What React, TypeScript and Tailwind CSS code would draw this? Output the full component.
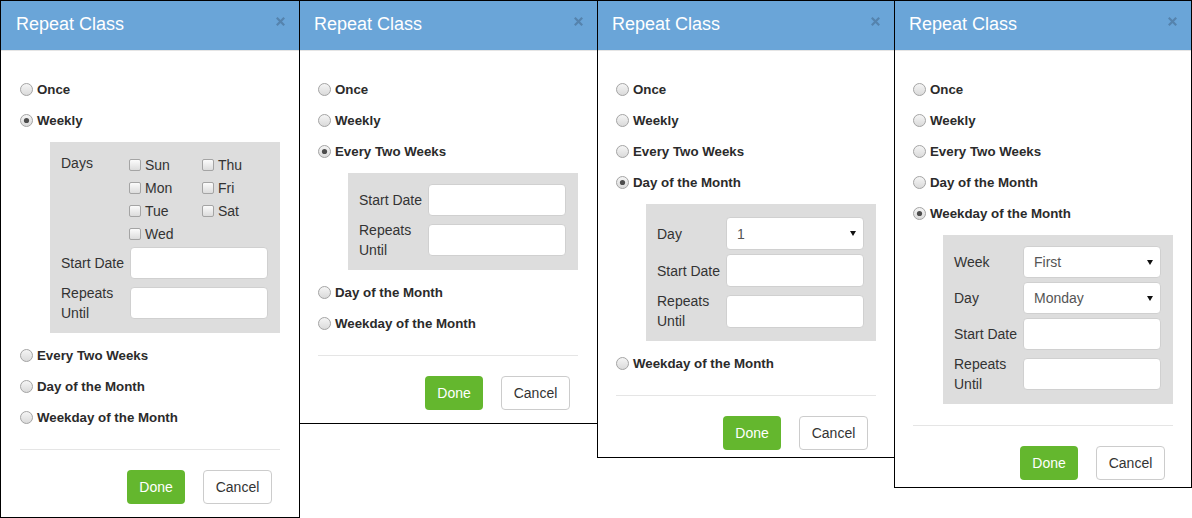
import React from "react";

const OPTIONS = ["Once", "Weekly", "Every Two Weeks", "Day of the Month", "Weekday of the Month"];

function Radio({ checked }: { checked: boolean }) {
  return (
    <svg width="13" height="13" viewBox="0 0 13 13" className="shrink-0 mb-[2px]">
      <defs>
        <linearGradient id="rgrad" x1="0" y1="0" x2="0" y2="1">
          <stop offset="0" stopColor="#f6f6f6" />
          <stop offset="1" stopColor="#d9d9d9" />
        </linearGradient>
      </defs>
      <circle cx="6.5" cy="6.5" r="6" fill="url(#rgrad)" stroke="#a4a4a4" strokeWidth="1" />
      {checked && <circle cx="6.5" cy="6.5" r="2.6" fill="#4d4d4d" />}
    </svg>
  );
}

function Check({ label }: { label: string }) {
  return (
    <div className="flex items-center h-[23px] gap-[4px]">
      <div className="w-[12px] h-[12px] rounded-[2px] border border-[#a4a4a4] bg-gradient-to-b from-[#fbfbfb] to-[#dcdcdc] shrink-0" />
      <span className="text-[14px] leading-[20px] text-[#333]">{label}</span>
    </div>
  );
}

function TextBox({ tall }: { tall: boolean }) {
  return (
    <input
      type="text"
      readOnly
      className={
        tall
          ? "w-[138px] h-[33px] bg-white rounded-[4px] border border-[#d0d0d0] outline-none"
          : "w-[138px] h-[32px] bg-white rounded-[4px] border border-[#d0d0d0] outline-none"
      }
    />
  );
}

function SelectBox({ value, tall }: { value: string; tall: boolean }) {
  return (
    <div
      className={
        tall
          ? "w-[138px] h-[33px] bg-white rounded-[4px] border border-[#d0d0d0] flex items-center justify-between pl-[10px] pr-[7px]"
          : "w-[138px] h-[32px] bg-white rounded-[4px] border border-[#d0d0d0] flex items-center justify-between pl-[10px] pr-[7px]"
      }
    >
      <span className="text-[14px] leading-[20px] text-[#555]">{value}</span>
      <svg width="6" height="5" viewBox="0 0 6 5">
        <polygon points="0,0 6,0 3,5" fill="#111" />
      </svg>
    </div>
  );
}

function Field({
  label,
  twoLine,
  mt,
  children,
}: {
  label: string;
  twoLine?: boolean;
  mt: string;
  children: React.ReactNode;
}) {
  return (
    <div className={twoLine ? `flex items-center h-[40px] ${mt}` : `flex items-center ${mt}`}>
      <div className="w-[69px] shrink-0 text-[14px] leading-[20px] text-[#333]">{label}</div>
      {children}
    </div>
  );
}

function Panel({ kind, tall }: { kind: string; tall: boolean }) {
  return (
    <div
      className={
        tall
          ? "w-[230px] ml-[30px] mt-[11px] bg-[#dddddd] pl-[11px] pr-[12px] pt-[13px] pb-[10px] flex flex-col"
          : "w-[230px] ml-[30px] mt-[11px] bg-[#dddddd] pl-[11px] pr-[12px] pt-[11px] pb-[10px] flex flex-col"
      }
    >
      {kind === "days" && (
        <div className="flex">
          <div className="w-[68px] shrink-0 text-[14px] leading-[20px] text-[#333]">Days</div>
          <div className="w-[73px] flex flex-col">
            {["Sun", "Mon", "Tue", "Wed"].map((d) => (
              <Check key={d} label={d} />
            ))}
          </div>
          <div className="flex flex-col">
            {["Thu", "Fri", "Sat"].map((d) => (
              <Check key={d} label={d} />
            ))}
          </div>
        </div>
      )}
      {kind === "dom" && (
        <Field label="Day" mt="">
          <SelectBox value="1" tall={tall} />
        </Field>
      )}
      {kind === "wom" && (
        <>
          <Field label="Week" mt="">
            <SelectBox value="First" tall={tall} />
          </Field>
          <Field label="Day" mt="mt-[4px]">
            <SelectBox value="Monday" tall={tall} />
          </Field>
        </>
      )}
      <Field label="Start Date" mt={kind === "dates" ? "" : kind === "days" ? "mt-[2px]" : "mt-[4px]"}>
        <TextBox tall={tall} />
      </Field>
      <Field label="Repeats Until" twoLine mt="mt-[4px]">
        <TextBox tall={tall} />
      </Field>
    </div>
  );
}

function Dialog({
  cls,
  padCls,
  titleCls,
  selected,
  panel,
  tall,
}: {
  cls: string;
  padCls: string;
  titleCls: string;
  selected: number;
  panel: string;
  tall: boolean;
}) {
  return (
    <div className={`${cls} shrink-0 border border-black bg-white flex flex-col overflow-hidden relative`}>
      <div className="h-[50px] bg-[#6aa5d8] border-b border-[#e5e5e5] flex justify-between pr-[14px] shrink-0">
        <div className={`${titleCls} pt-[13px] text-[18px] leading-[20px] text-white`}>Repeat Class</div>
        <svg width="9" height="9" viewBox="0 0 9 9" className="mt-[16px]">
          <path d="M0.8 0.8 L8.2 8.2 M8.2 0.8 L0.8 8.2" stroke="#5583ad" strokeWidth="2.2" strokeLinecap="butt" />
        </svg>
      </div>
      <div className={`${padCls} pt-[29px] flex flex-col`}>
        {OPTIONS.map((opt, i) => (
          <React.Fragment key={opt}>
            <div
              className={
                i === 0
                  ? "flex items-center h-[20px] gap-[4px]"
                  : i - 1 === selected
                  ? "flex items-center h-[20px] gap-[4px] mt-[13px]"
                  : "flex items-center h-[20px] gap-[4px] mt-[11px]"
              }
            >
              <Radio checked={i === selected} />
              <span className="text-[13.3px] font-bold leading-[20px] text-[#2b2b2b]">{opt}</span>
            </div>
            {i === selected && <Panel kind={panel} tall={tall} />}
          </React.Fragment>
        ))}
        <div className="mt-[21px] w-[260px] border-t border-[#e5e5e5] pt-[20px] pr-[8px] flex justify-end gap-[18px]">
          <button className="w-[58px] h-[34px] rounded-[4px] bg-[#64b72e] text-white text-[14px] leading-[20px]">
            Done
          </button>
          <button className="w-[69px] h-[34px] rounded-[4px] border border-[#cccccc] bg-white text-[#333] text-[14px] leading-[20px]">
            Cancel
          </button>
        </div>
      </div>
    </div>
  );
}

export default function App() {
  return (
    <div className="flex items-start w-[1192px] h-[518px] bg-white overflow-hidden font-['Liberation_Sans',Arial,sans-serif]">
      <Dialog cls="w-[300px] h-[518px]" padCls="pl-[19px]" titleCls="pl-[15px]" selected={1} panel="days" tall={false} />
      <Dialog cls="w-[299px] h-[424px] -ml-px" padCls="pl-[18px]" titleCls="pl-[14px]" selected={2} panel="dates" tall={false} />
      <Dialog cls="w-[298px] h-[458px] -ml-px" padCls="pl-[18px]" titleCls="pl-[14px]" selected={3} panel="dom" tall={true} />
      <Dialog cls="w-[298px] h-[488px] -ml-px" padCls="pl-[18px]" titleCls="pl-[14px]" selected={4} panel="wom" tall={false} />
    </div>
  );
}
